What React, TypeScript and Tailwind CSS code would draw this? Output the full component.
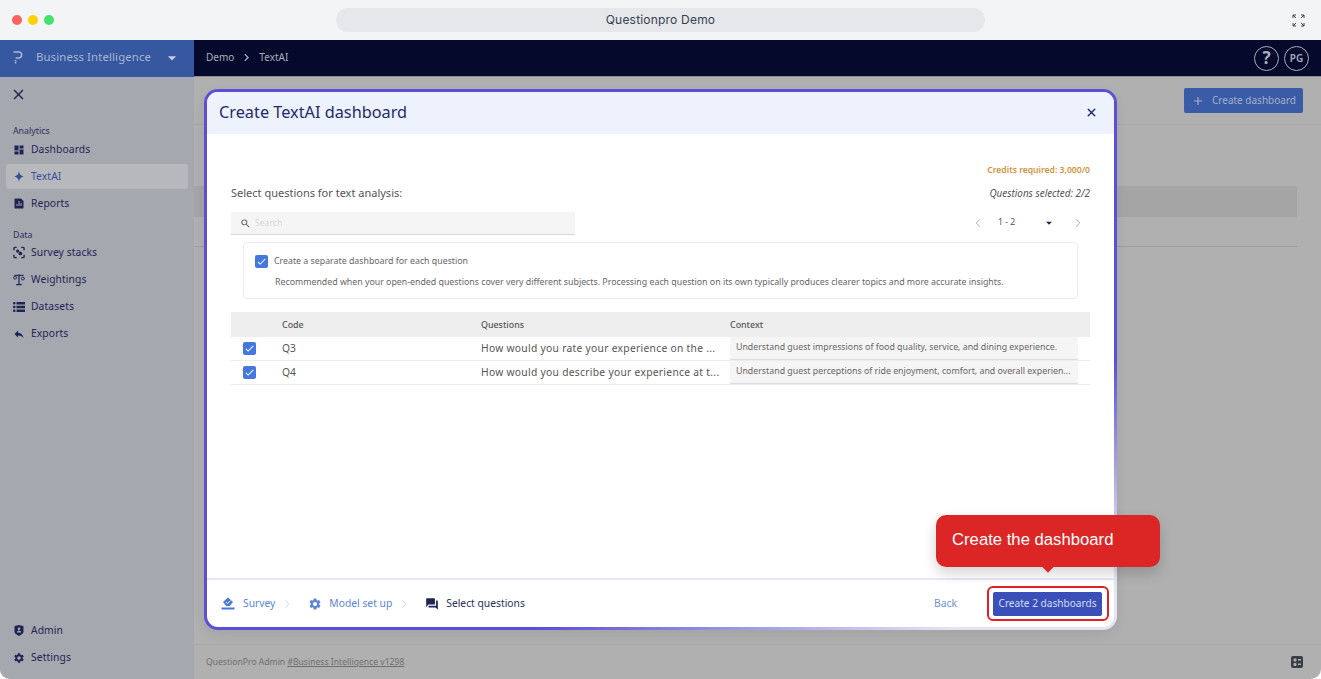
import React from 'react';
import { MdClose, MdDashboard, MdSettings, MdSearch, MdArrowDropDown, MdChevronRight, MdCheck, MdAdd, MdQuestionAnswer, MdReply } from 'react-icons/md';
import { RiFileChartFill, RiShieldUserFill } from 'react-icons/ri';
import { ChevronLeft, ChevronRight, X } from 'lucide-react';

const NavItem = ({ icon, label, active = false }: { icon: React.ReactNode; label: string; active?: boolean }) => (
  <div className={`flex h-[25px] items-center gap-[6px] rounded-[3px] pl-[7px] text-[10.3px] tracking-[0.1px] ${active ? 'bg-[#b6b8bb] text-[#34509a]' : 'text-[#1f2455]'}`}>
    <span className="flex w-[12px] justify-center">{icon}</span>
    <span>{label}</span>
  </div>
);

const Check = () => (
  <span className="flex h-[13px] w-[13px] items-center justify-center rounded-[2px] bg-[#4478dc] text-white">
    <MdCheck size={11} />
  </span>
);

const Row = ({ code, question, context }: { code: string; question: string; context: string }) => (
  <div className="flex h-[24px] items-center border-b border-[#ececec] text-[#555]">
    <div className="w-[51px] pl-[12px]"><Check /></div>
    <div className="w-[199px] text-[10.3px]">{code}</div>
    <div className="w-[249px] whitespace-nowrap text-[10.25px] tracking-[0.3px]">{question}</div>
    <div className="flex h-full w-[348px] items-center border-b border-[#dedede] bg-[#f5f5f5] pl-[6px] text-[8.8px] text-[#666]">
      <span className="whitespace-nowrap">{context}</span>
    </div>
  </div>
);

export default function App() {
  return (
    <div className="h-[679px] w-[1321px] overflow-hidden bg-white font-['Noto_Sans',sans-serif]">
      <div className="relative h-full w-full overflow-hidden rounded-b-[10px] bg-[#b0b0b0]">
        {/* window bar */}
        <div className="flex h-[40px] items-center bg-[#f3f4f6] pl-[12px] pr-[16px]">
          <div className="flex w-[324px] gap-[6px]">
            <span className="h-[10px] w-[10px] rounded-full bg-[#ff6060]" />
            <span className="h-[10px] w-[10px] rounded-full bg-[#ffd000]" />
            <span className="h-[10px] w-[10px] rounded-full bg-[#46e06c]" />
          </div>
          <div className="flex h-[24px] w-[649px] items-center justify-center rounded-full bg-[#e5e7eb] font-['Inter',sans-serif] text-[12px] tracking-[0.2px] text-[#374151]">
            Questionpro Demo
          </div>
          <svg className="ml-auto" width="13" height="13" viewBox="0 0 13 13" fill="none" stroke="#374151" strokeWidth="1">
            <path d="M1 4V1h3M1 1l3 3M9 1h3v3M12 1L9 4M1 9v3h3M1 12l3-3M9 12h3V9M12 12L9 9" />
          </svg>
        </div>

        <div className="flex h-[639px]">
          {/* sidebar */}
          <aside className="flex w-[194px] flex-col bg-[#a5a8ae]">
            <div className="flex h-[37px] items-center justify-between bg-[#3558a0] pb-[2px] pl-[13px] pr-[12px] text-[#a9b5d0]">
              <div className="flex items-center gap-[13px]">
                <svg width="10" height="13" viewBox="0 0 10 13" fill="none" stroke="#a9b5d0" strokeWidth="1.6">
                  <path d="M0.500 1h5.200a3 3 0 0 1 0 6H2.600M2.600 9v1.400M2.600 11v1.400" />
                </svg>
                <span className="whitespace-nowrap text-[11.3px] tracking-[0.15px]">Business Intelligence</span>
              </div>
              <MdArrowDropDown size={20} className="text-[#c3cce0]" />
            </div>
            <div className="flex flex-1 flex-col px-[6px]">
              <MdClose size={17} className="ml-[4px] mt-[9px] text-[#1f2455]" />
              <div className="ml-[7px] mt-[22px] text-[8.8px] leading-[12px] text-[#2b3060]">Analytics</div>
              <div className="flex flex-col gap-[2px]">
                <NavItem icon={<MdDashboard size={16} />} label="Dashboards" />
                <NavItem active icon={<svg width="10" height="11" viewBox="0 0 9 10" fill="#34509a"><path d="M4.500 0C5 3 6 4.300 9 5 6 5.700 5 7 4.500 10 4 7 3 5.700 0 5 3 4.300 4 3 4.500 0z" /></svg>} label="TextAI" />
                <NavItem icon={<RiFileChartFill size={13} />} label="Reports" />
              </div>
              <div className="-mb-[1px] ml-[7px] mt-[13px] text-[8.8px] leading-[12px] text-[#2b3060]">Data</div>
              <div className="flex flex-col gap-[2px]">
                <NavItem
                  icon={
                    <svg width="13" height="13" viewBox="0 0 13 13" fill="none" stroke="#1f2455" strokeWidth="1.500">
                      <path d="M1 4V2a1 1 0 0 1 1-1h2M9 1h2a1 1 0 0 1 1 1v2M1 9v2a1 1 0 0 0 1 1h2M9 12h2a1 1 0 0 0 1-1V9" />
                      <circle cx="5" cy="5" r="1.700" fill="#1f2455" stroke="none" />
                      <circle cx="8" cy="7.500" r="2" fill="#1f2455" stroke="none" />
                    </svg>
                  }
                  label="Survey stacks"
                />
                <NavItem
                  icon={
                    <svg width="13" height="13" viewBox="0 0 13 13" fill="none" stroke="#1f2455">
                      <path d="M6.500 1v10.500M3.500 12h6" strokeWidth="1.300" />
                      <path d="M1.500 2h10" strokeWidth="1.200" />
                      <ellipse cx="2.300" cy="4.500" rx="1.700" ry="1.500" strokeWidth="1" />
                      <ellipse cx="10.700" cy="5.500" rx="1.700" ry="1.500" strokeWidth="1" />
                    </svg>
                  }
                  label="Weightings"
                />
                <NavItem
                  icon={
                    <svg width="12" height="12" viewBox="0 0 12 12" fill="#1f2455">
                      <rect x="0" y="1" width="2.500" height="2.500" rx="1" />
                      <rect x="3.500" y="1" width="8.500" height="2.500" />
                      <rect x="0" y="4.750" width="2.500" height="2.500" rx="1" />
                      <rect x="3.500" y="4.750" width="8.500" height="2.500" />
                      <rect x="0" y="8.500" width="2.500" height="2.500" rx="1" />
                      <rect x="3.500" y="8.500" width="8.500" height="2.500" />
                    </svg>
                  }
                  label="Datasets"
                />
                <NavItem icon={<MdReply size={14} />} label="Exports" />
              </div>
              <div className="mb-[9px] mt-auto flex flex-col gap-[2px]">
                <NavItem icon={<RiShieldUserFill size={15} />} label="Admin" />
                <NavItem icon={<MdSettings size={14} />} label="Settings" />
              </div>
            </div>
          </aside>

          {/* page behind the dialog */}
          <main className="flex flex-1 flex-col">
            <div className="flex h-[37px] items-center justify-between border-b border-[#8d8d8d] bg-[#050a2c] pl-[12px] pr-[12px] text-[#a9adba]">
              <div className="flex items-center gap-[5px] pb-[1px] text-[10px]">
                <span>Demo</span>
                <MdChevronRight size={15} />
                <span>TextAI</span>
              </div>
              <div className="flex gap-[5px]">
                <span className="flex h-[25px] w-[25px] items-center justify-center rounded-full border border-[#a9adba] text-[17px] font-bold">?</span>
                <span className="flex h-[25px] w-[25px] items-center justify-center rounded-full border border-[#a9adba] text-[10px] font-semibold">PG</span>
              </div>
            </div>
            <div className="flex h-[48px] items-center justify-end border-b border-[#a8a8a8] pr-[18px]">
              <button className="flex h-[25px] w-[119px] items-center gap-[7px] whitespace-nowrap rounded-[2px] bg-[#3a5ba6] pl-[7px] text-[10px] text-[#a3afc9]">
                <MdAdd size={14} />
                Create dashboard
              </button>
            </div>
            <div className="mr-[24px] mt-[61px] h-[31px] bg-[#a5a5a5]" />
            <div className="mr-[24px] mt-[29px] border-b border-[#9e9e9e]" />
            <div className="mt-auto flex h-[35px] items-center justify-between border-t border-[#a8a8a8] pl-[12px] pr-[18px] text-[8.6px] text-[#6f6f6f]">
              <span>QuestionPro Admin <span className="underline">#Business Intelligence v1298</span></span>
              <svg width="12" height="12" viewBox="0 0 12 12">
                <rect width="12" height="12" rx="2" fill="#3a3d45" />
                <rect x="2.500" y="2.500" width="3" height="3" rx="1" fill="#b0b0b0" />
                <rect x="7" y="3" width="3" height="1.500" fill="#b0b0b0" />
                <rect x="2.500" y="7" width="3" height="3" rx="1" fill="#b0b0b0" />
                <rect x="7" y="7.500" width="3" height="1.500" fill="#b0b0b0" />
              </svg>
            </div>
          </main>
        </div>

        {/* dialog */}
        <div className="absolute left-[204px] top-[89px] h-[541px] w-[913px] rounded-[14px] bg-[linear-gradient(155deg,#5b4fd8_72%,#e3e6f2_92%)] p-[3px] shadow-[0_4px_12px_rgba(0,0,0,0.08)]">
          <div className="flex h-full w-full flex-col overflow-hidden rounded-[11px] bg-white">
            <div className="flex h-[42px] shrink-0 items-center justify-between bg-[#eef2fd] pb-[2px] pl-[12px] pr-[16px] text-[#1f2a6b]">
              <span className="text-[16.3px]">Create TextAI dashboard</span>
              <X size={13} strokeWidth={2.6} />
            </div>
            <div className="flex flex-1 flex-col px-[24px]">
              <div className="mt-[30px] text-right text-[8.6px] font-semibold leading-[12px] text-[#d49340]">Credits required: 3,000/0</div>
              <div className="mt-[11px] flex items-center justify-between leading-[12px]">
                <span className="text-[11px] text-[#555]">Select questions for text analysis:</span>
                <span className="text-[9.900px] italic text-[#555]">Questions selected: 2/2</span>
              </div>
              <div className="mt-[13px] flex items-center justify-between">
                <div className="flex h-[23px] w-[344px] items-center gap-[4px] rounded-t-[2px] border-b border-[#d8d8d8] bg-[#f5f5f5] pl-[9px] text-[8.6px] text-[#d5d5d5]">
                  <MdSearch size={11} className="text-[#555]" />
                  Search
                </div>
                <div className="flex items-center pb-[2px] pr-[5px] text-[8.6px] text-[#555]">
                  <ChevronLeft size={14} strokeWidth={1.2} className="text-[#888]" />
                  <span className="ml-[13px] w-[44px]">1 - 2</span>
                  <MdArrowDropDown size={14} className="text-[#1f2455]" />
                  <ChevronRight size={14} strokeWidth={1.2} className="ml-[15px] text-[#888]" />
                </div>
              </div>
              <div className="mx-[12px] mt-[7px] h-[57px] rounded-[4px] border border-[#ececec] pl-[11px] pt-[12px] text-[#666]">
                <div className="flex items-center gap-[6px] text-[8.8px]">
                  <Check />
                  Create a separate dashboard for each question
                </div>
                <div className="ml-[20px] mt-[8px] text-[8.8px]">
                  Recommended when your open-ended questions cover very different subjects. Processing each question on its own typically produces clearer topics and more accurate insights.
                </div>
              </div>
              <div className="mt-[13px] flex h-[25px] items-center bg-[#eeeeee] text-[8.9px] font-medium text-[#555]">
                <div className="w-[51px]" />
                <div className="w-[199px]">Code</div>
                <div className="w-[249px]">Questions</div>
                <div>Context</div>
              </div>
              <Row code="Q3" question="How would you rate your experience on the ..." context="Understand guest impressions of food quality, service, and dining experience." />
              <Row code="Q4" question="How would you describe your experience at t..." context="Understand guest perceptions of ride enjoyment, comfort, and overall experien..." />
            </div>
            <div className="flex h-[49px] shrink-0 items-center justify-between border-t-2 border-[#e6e8f5] pl-[14px] pr-[12px] text-[10.3px]">
              <div className="flex items-center text-[#5a86d6]">
                <svg width="14" height="13" viewBox="0 0 14 13" fill="#4a78d4">
                  <path d="M7 0.500L12 5 8.800 9H5.200L2 5z" />
                  <path d="M4.800 5l1.600 1.600L9.300 3.700" fill="none" stroke="#fff" strokeWidth="1" />
                  <rect x="0.500" y="10.500" width="13" height="2" />
                </svg>
                <span className="ml-[8px]">Survey</span>
                <ChevronRight size={14} strokeWidth={1} className="ml-[5px] text-[#bbb]" />
                <MdSettings size={14} className="ml-[14px]" />
                <span className="ml-[7px]">Model set up</span>
                <ChevronRight size={14} strokeWidth={1} className="ml-[5px] text-[#bbb]" />
                <MdQuestionAnswer size={14} className="ml-[14px] text-[#1f2455]" />
                <span className="ml-[7px] text-[#2b3060]">Select questions</span>
              </div>
              <div className="flex items-center">
                <span className="mr-[36px] text-[#6f92cf]">Back</span>
                <button className="flex h-[24px] w-[109px] items-center justify-center whitespace-nowrap rounded-[2px] bg-[#3a50b8] text-[10.1px] text-[#d5dbf2]">
                  Create 2 dashboards
                </button>
              </div>
            </div>
          </div>
        </div>

        {/* highlight + tooltip */}
        <div className="absolute left-[987px] top-[586px] h-[35px] w-[122px] rounded-[6px] border-[2.5px] border-[#e01f26]" />
        <div className="absolute left-[936px] top-[515px] flex h-[52px] w-[224px] items-center rounded-[10px] bg-[#dc2626] pb-[3px] pl-[16px] font-['Liberation_Sans',sans-serif] text-[16.7px] text-white shadow-[0_6px_14px_rgba(0,0,0,0.18)]">
          Create the dashboard
          <span className="absolute left-[108px] top-[48px] h-[8px] w-[8px] rotate-45 bg-[#dc2626]" />
        </div>
      </div>
    </div>
  );
}
